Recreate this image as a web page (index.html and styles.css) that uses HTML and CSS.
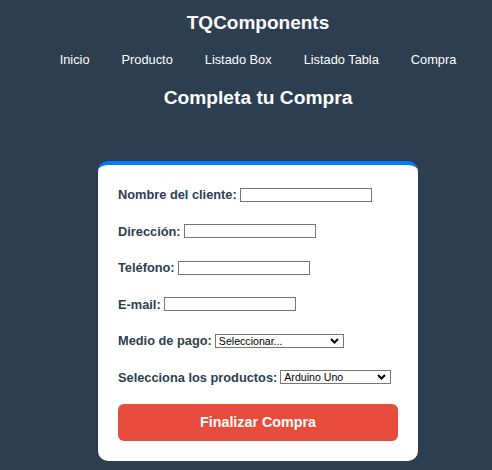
FILE: index.html
```html
<!DOCTYPE html>
<html lang="es">
<head>
<meta charset="utf-8">
<title>Completa tu Compra</title>
<link rel="stylesheet" href="styles.css">
</head>
<body>
<header class="site-header">
  <h1 class="brand">TQComponents</h1>
  <nav class="nav">
    <a href="#">Inicio</a>
    <a href="#">Producto</a>
    <a href="#">Listado Box</a>
    <a href="#">Listado Tabla</a>
    <a href="#">Compra</a>
  </nav>
</header>
<main class="main">
  <h2 class="page-title">Completa tu Compra</h2>
  <form class="card">
    <div class="row"><label>Nombre del cliente:</label><input type="text" class="field"></div>
    <div class="row"><label>Dirección:</label><input type="text" class="field"></div>
    <div class="row"><label>Teléfono:</label><input type="text" class="field"></div>
    <div class="row"><label>E-mail:</label><input type="text" class="field"></div>
    <div class="row"><label>Medio de pago:</label>
      <span class="sel-wrap sel-pay">
        <select class="sel"><option>Seleccionar...</option></select>
        <svg class="chev" width="9" height="6" viewBox="0 0 9 6"><path d="M1 1 L4.5 4.5 L8 1" fill="none" stroke="#000" stroke-width="2"/></svg>
      </span>
    </div>
    <div class="row"><label>Selecciona los productos:</label>
      <span class="sel-wrap sel-prod">
        <select class="sel"><option>Arduino Uno</option></select>
        <svg class="chev" width="9" height="6" viewBox="0 0 9 6"><path d="M1 1 L4.5 4.5 L8 1" fill="none" stroke="#000" stroke-width="2"/></svg>
      </span>
    </div>
    <button type="button" class="submit">Finalizar Compra</button>
  </form>
</main>
</body>
</html>
```

FILE: styles.css
```css
html, body {
  margin: 0;
  padding: 0;
  background: #2c3e50;
  font-family: "Liberation Sans", Arial, sans-serif;
}
body {
  padding-left: 24px;
}
.site-header {
  text-align: center;
  color: #fff;
  padding-top: 12px;
}
.brand {
  margin: 0;
  font-size: 19px;
  line-height: 21px;
  font-weight: bold;
}
.nav {
  display: flex;
  justify-content: center;
  gap: 32px;
  margin-top: 19px;
  font-size: 12.8px;
  line-height: 16px;
}
.nav a {
  color: #fff;
  text-decoration: none;
}
.main {
  display: flex;
  flex-direction: column;
  align-items: center;
}
.page-title {
  color: #fff;
  margin: 18px 0 0;
  font-size: 19.2px;
  line-height: 23px;
}
.card {
  margin-top: 52px;
  width: 280px;
  background: #fff;
  border-top: 4px solid #007bff;
  border-radius: 10px;
  padding: 21.5px 20px 20px;
}
.row {
  display: flex;
  align-items: center;
  gap: 3px;
  height: 16px;
  color: #2c3e50;
  font-size: 12.8px;
  font-weight: bold;
}
.row + .row {
  margin-top: 20.6px;
}
.field {
  box-sizing: border-box;
  width: 132px;
  height: 14px;
  border: 1px solid #767676;
  padding: 0;
  margin: 0;
}
.sel-wrap {
  position: relative;
  display: block;
  height: 14px;
}
.sel-pay { width: 129px; }
.sel-prod { width: 111px; }
.sel {
  box-sizing: border-box;
  display: block;
  width: 100%;
  height: 14px;
  -webkit-appearance: none;
  appearance: none;
  font-family: "Liberation Sans", Arial, sans-serif;
  font-size: 10.6px;
  line-height: 12px;
  border: 1px solid #767676;
  border-radius: 0;
  padding: 0 0 0 3px;
  margin: 0;
  background: #fff;
  color: #000;
}
.chev {
  position: absolute;
  right: 5px;
  top: 4px;
  pointer-events: none;
}
.submit {
  display: block;
  width: 100%;
  height: 37px;
  margin-top: 18.5px;
  background: #e74c3c;
  color: #fff;
  border: none;
  border-radius: 6px;
  font-family: "Liberation Sans", Arial, sans-serif;
  font-size: 14.3px;
  font-weight: bold;
}
```
